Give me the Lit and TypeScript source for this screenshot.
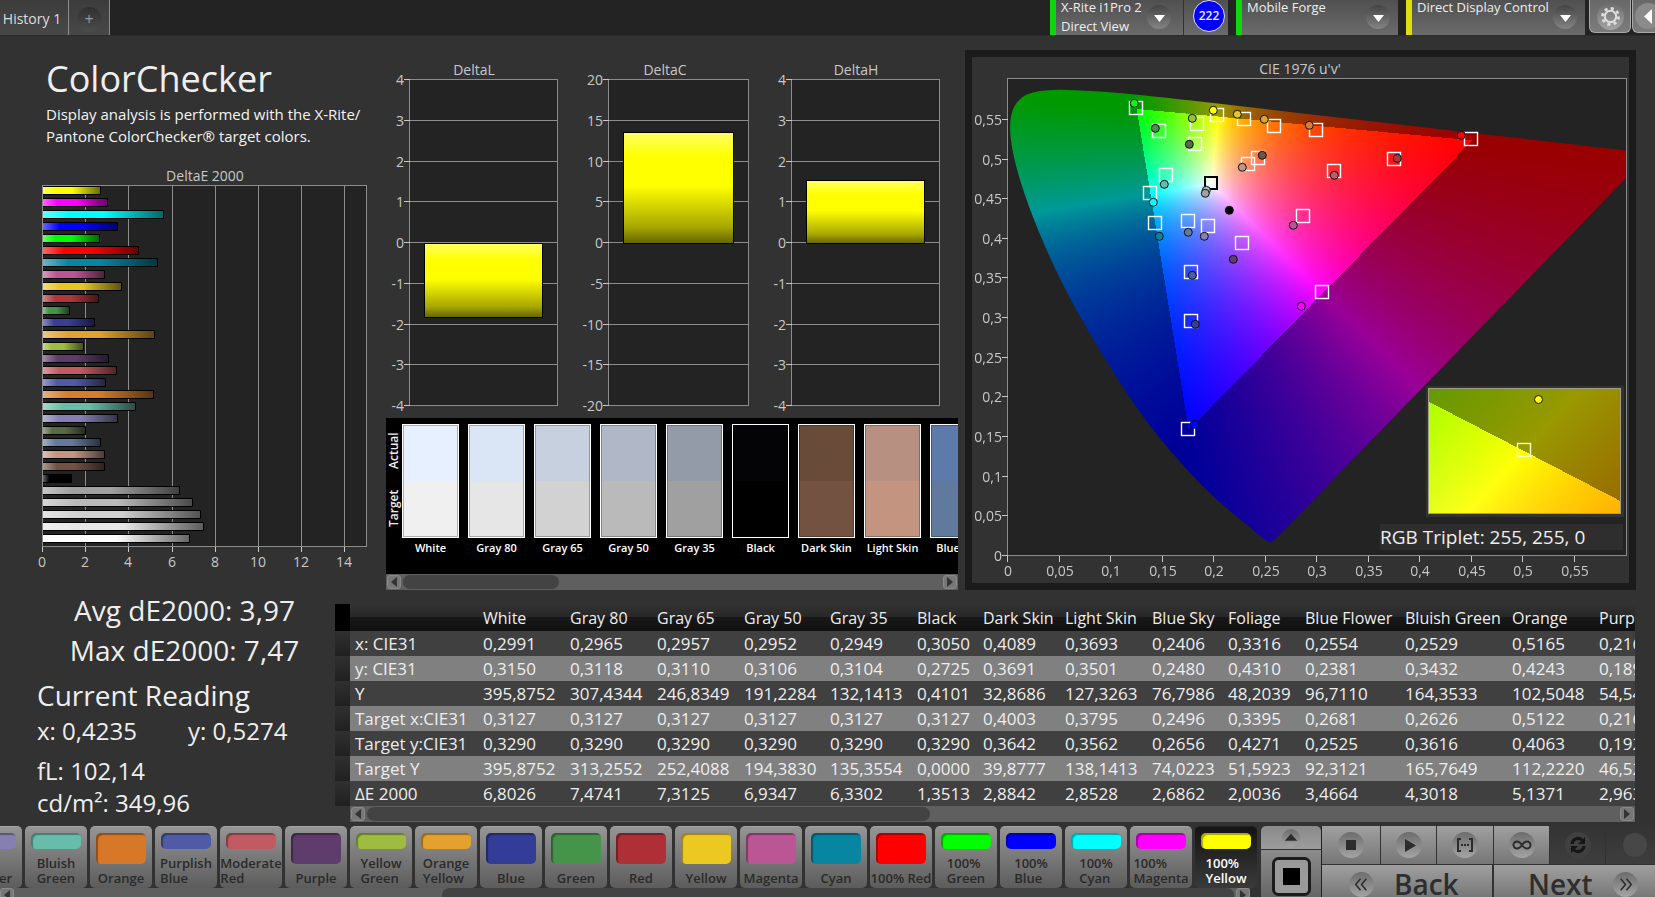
import { LitElement, html, svg, css } from "lit";
import { customElement } from "lit/decorators.js";

type Point = [number, number];

/* ---------- measurement data ---------- */

const BARS: [string, number][] = [
  ["#ffff00", 2.7], ["#ff00ff", 3.02], ["#00ffff", 5.62], ["#0000ff", 3.49], ["#00ff00", 2.65],
  ["#ff0000", 4.45], ["#0885a1", 5.34], ["#bb5695", 2.88], ["#e7c71f", 3.67], ["#af363c", 2.6],
  ["#469449", 1.26], ["#383d96", 2.42], ["#e0a32e", 5.2], ["#9dbc40", 1.91], ["#5e3c6c", 3.07],
  ["#c15a63", 3.44], ["#505ba6", 2.93], ["#d67e2c", 5.1371], ["#67bdaa", 4.3018], ["#8580b1", 3.4664],
  ["#576c43", 2.0036], ["#627a9d", 2.6862], ["#c29682", 2.8528], ["#735244", 2.8842], ["#000000", 1.3513],
  ["#a0a0a0", 6.3302], ["#bababa", 6.9347], ["#d0d0d0", 7.3125], ["#e6e6e6", 7.4741], ["#ffffff", 6.8026],
];

interface DeltaChart { title: string; left: number; right: number; titleX: number; max: number; value: number; inset: number; }
const DELTAS: DeltaChart[] = [
  { title: "DeltaL", left: 410, right: 558, titleX: 474, max: 4, value: -1.81, inset: 14 },
  { title: "DeltaC", left: 609, right: 749, titleX: 665, max: 20, value: 13.6, inset: 14 },
  { title: "DeltaH", left: 792, right: 940, titleX: 856, max: 4, value: 1.55, inset: 14 },
];

const SWATCHES: [string, string, string][] = [
  ["White", "#e6f0ff", "#f0f0f0"], ["Gray 80", "#dae5f5", "#e6e6e6"], ["Gray 65", "#c6d0df", "#d2d2d2"],
  ["Gray 50", "#b0b8c8", "#bababa"], ["Gray 35", "#949ba8", "#a0a0a0"], ["Black", "#040406", "#000000"],
  ["Dark Skin", "#694b3a", "#735241"], ["Light Skin", "#b89082", "#c39580"], ["Blue Sky", "#5c7baa", "#5f7a9c"],
];

const COLUMNS: [string, number][] = [
  ["White", 87], ["Gray 80", 87], ["Gray 65", 87], ["Gray 50", 86], ["Gray 35", 87], ["Black", 66],
  ["Dark Skin", 82], ["Light Skin", 87], ["Blue Sky", 76], ["Foliage", 77], ["Blue Flower", 100],
  ["Bluish Green", 107], ["Orange", 87], ["Purplish Blue", 107],
];
const ROWS: [string, string][] = [
  ["x: CIE31", "0,2991 0,2965 0,2957 0,2952 0,2949 0,3050 0,4089 0,3693 0,2406 0,3316 0,2554 0,2529 0,5165 0,2162"],
  ["y: CIE31", "0,3150 0,3118 0,3110 0,3106 0,3104 0,2725 0,3691 0,3501 0,2480 0,4310 0,2381 0,3432 0,4243 0,1895"],
  ["Y", "395,8752 307,4344 246,8349 191,2284 132,1413 0,4101 32,8686 127,3263 76,7986 48,2039 96,7110 164,3533 102,5048 54,5433"],
  ["Target x:CIE31", "0,3127 0,3127 0,3127 0,3127 0,3127 0,3127 0,4003 0,3795 0,2496 0,3395 0,2681 0,2626 0,5122 0,2162"],
  ["Target y:CIE31", "0,3290 0,3290 0,3290 0,3290 0,3290 0,3290 0,3642 0,3562 0,2656 0,4271 0,2525 0,3616 0,4063 0,1925"],
  ["Target Y", "395,8752 313,2552 252,4088 194,3830 135,3554 0,0000 39,8777 138,1413 74,0223 51,5923 92,3121 165,7649 112,2220 46,5211"],
  ["ΔE 2000", "6,8026 7,4741 7,3125 6,9347 6,3302 1,3513 2,8842 2,8528 2,6862 2,0036 3,4664 4,3018 5,1371 2,9633"],
];

const PATCHES: [string, string][] = [
  ["Blue Flower", "#8580b1"], ["Bluish Green", "#67bdaa"], ["Orange", "#d67827"], ["Purplish Blue", "#505ba6"],
  ["Moderate Red", "#c15a63"], ["Purple", "#5e3c6c"], ["Yellow Green", "#9dbc40"], ["Orange Yellow", "#e5a12e"],
  ["Blue", "#333c96"], ["Green", "#469449"], ["Red", "#af2f37"], ["Yellow", "#ebc822"], ["Magenta", "#bb5695"],
  ["Cyan", "#0885a1"], ["100% Red", "#ff0000"], ["100% Green", "#00ff00"], ["100% Blue", "#0000ff"],
  ["100% Cyan", "#00ffff"], ["100% Magenta", "#ff00ff"], ["100% Yellow", "#ffff00"],
];

/* Marker positions in chart units of the CIE drawing. */
const TARGETS: Point[] = [
  [1136, 108], [1159, 131], [1197, 124], [1195, 144], [1217, 115], [1244, 119], [1274, 126], [1316, 130],
  [1258, 158], [1248, 164], [1166, 175], [1150, 193], [1155, 223], [1188, 221], [1208, 226], [1242, 243],
  [1191, 272], [1303, 216], [1334, 171], [1471, 139], [1394, 159], [1322, 292], [1191, 321], [1188, 429],
];
const READINGS: [number, number, string][] = [
  [1134, 103, "#00ff00"], [1155, 128, "#469449"], [1192, 118, "#9dbc40"], [1189, 144, "#576c43"],
  [1213, 110, "#ffff00"], [1237, 114, "#e7c71f"], [1264, 119, "#e0a32e"], [1309, 125, "#d67e2c"],
  [1262, 155, "#735244"], [1242, 167, "#c29682"], [1206, 190, "#bababa"], [1205, 193, "#a0a0a0"],
  [1164, 184, "#67bdaa"], [1153, 202, "#00ffff"], [1159, 236, "#0885a1"], [1188, 232, "#627a9d"],
  [1204, 236, "#8580b1"], [1233, 259, "#5e3c6c"], [1192, 275, "#505ba6"], [1229, 210, "#000000"],
  [1293, 225, "#bb5695"], [1334, 175, "#c15a63"], [1461, 135, "#ff0000"], [1397, 158, "#af363c"],
  [1301, 306, "#ff00ff"], [1195, 324, "#383d96"], [1194, 424, "#0000ff"],
];

/* Spectral locus in CIE 1976 u'v'. */
const LOCUS: Point[] = [
  [.2568, .0163], [.2522, .0169], [.2461, .0226], [.2347, .035], [.2161, .0549], [.1877, .0871], [.1441, .151],
  [.1147, .2044], [.0828, .2708], [.0521, .3427], [.0282, .4117], [.0119, .4698], [.0035, .5131], [.0014, .5432],
  [.0046, .5638], [.0123, .577], [.0231, .5837], [.036, .5861], [.0501, .5868], [.0792, .5856], [.1127, .5821],
  [.1531, .5766], [.2026, .5694], [.2623, .5604], [.3315, .5501], [.4035, .5393], [.4692, .5296], [.5203, .5219],
  [.583, .5125], [.6234, .5065],
];

/* Colour of a chromaticity; anything outside Rec. 709 is shown dimmed. */
function chromaColour(x: number, y: number): [number, number, number] {
  const z = 1 - x - y;
  const lin = [
    3.2406 * x - 1.5372 * y - 0.4986 * z,
    -0.9689 * x + 1.8758 * y + 0.0415 * z,
    0.0557 * x - 0.204 * y + 1.057 * z,
  ];
  const dim = Math.min(...lin) < 0 ? 0.6 : 1;
  const peak = Math.max(...lin);
  return lin.map((c) => Math.round(255 * dim * (Math.max(c, 0) / peak))) as [number, number, number];
}

function paint(canvas: HTMLCanvasElement, toXy: (px: number, py: number) => Point) {
  const { width, height } = canvas;
  const ctx = canvas.getContext("2d")!;
  const image = ctx.createImageData(width, height);
  for (let py = 0; py < height; py++) {
    for (let px = 0; px < width; px++) {
      const [x, y] = toXy(px + 0.5, py + 0.5);
      const [r, g, b] = chromaColour(x, y);
      image.data.set([r, g, b, 255], (py * width + px) * 4);
    }
  }
  ctx.putImageData(image, 0, 0);
  return ctx;
}

const U_SCALE = 1030;
const V_SCALE = 793;
const plotX = (u: number) => 1008 + u * U_SCALE;
const plotY = (v: number) => 555 - v * V_SCALE;
const comma = (n: number) => String(n).replace(".", ",");

/* ---------- scroll bar ---------- */

@customElement("scroll-strip")
class ScrollStrip extends LitElement {
  static properties = { start: { type: Number }, size: { type: Number } };
  declare start: number;
  declare size: number;
  static styles = css`
    :host { display: flex; align-items: center; gap: 2px; height: 16px; background: #5f5f5f; padding: 0 1px; box-sizing: border-box; }
    button { flex: none; width: 14px; height: 14px; padding: 0; border: 1px solid #8a8a8a; border-radius: 3px; background: #777; display: grid; place-items: center; }
    svg { width: 6px; height: 10px; fill: #333; display: block; }
    .track { flex: 1; height: 14px; display: flex; }
    .thumb { background: #434343; border-radius: 7px; }
  `;
  render() {
    return html`
      <button aria-label="Scroll left"><svg viewBox="0 0 6 10"><path d="M6 0v10L0 5z"/></svg></button>
      <div class="track"><div class="thumb" style="margin-left:${this.start}%;width:${this.size}%"></div></div>
      <button aria-label="Scroll right"><svg viewBox="0 0 6 10"><path d="M0 0v10l6-5z"/></svg></button>`;
  }
}

/* ---------- bar charts ---------- */

@customElement("delta-e-chart")
class DeltaEChart extends LitElement {
  static styles = css`
    :host { display: block; }
    svg { display: block; width: 100%; }
    text { font: 14px "Open Sans", sans-serif; fill: #c8c8c8; text-anchor: middle; }
  `;
  render() {
    const unit = 21.6;
    const ticks = [0, 2, 4, 6, 8, 10, 12, 14];
    return html`<svg viewBox="0 163 386 427" role="img" aria-label="DeltaE 2000 per patch">
      <defs><linearGradient id="shade">
        <stop offset="0" stop-color="#fff" stop-opacity=".4"/><stop offset=".22" stop-color="#fff" stop-opacity="0"/>
        <stop offset=".5" stop-color="#000" stop-opacity="0"/><stop offset="1" stop-color="#000" stop-opacity=".6"/>
      </linearGradient></defs>
      <text x="205" y="181">DeltaE 2000</text>
      <rect x="42.5" y="185.5" width="324" height="361" fill="#232323" stroke="#8c8c8c"/>
      ${ticks.map((t) => svg`
        <path d="M${Math.round(42 + t * unit) + .5} 186V551" stroke="#8c8c8c"/>
        <path d="M${Math.round(42 + t * unit) + .5} 547V552" stroke="#c8c8c8"/>
        <text x=${Math.round(42 + t * unit)} y="567">${t}</text>`)}
      ${BARS.map(([c, v], i) => svg`
        <rect x="43" y=${186.5 + i * 12} width=${v * unit - .5} height="8" fill=${c}/>
        <rect x="43" y=${186.5 + i * 12} width=${v * unit - .5} height="8" fill="url(#shade)"/>
        <path d="M43 ${186.5 + i * 12}H${Math.round(42 + v * unit) + .5}v8H43" fill="none" stroke="#000"/>`)}
    </svg>`;
  }
}

@customElement("delta-lch-chart")
class DeltaLchChart extends LitElement {
  static styles = css`
    :host { display: block; }
    svg { display: block; width: 100%; }
    text { font: 14px "Open Sans", sans-serif; fill: #c8c8c8; text-anchor: middle; }
    .tick { text-anchor: end; }
  `;
  chart(d: DeltaChart) {
    const zero = 243;
    const barY = zero - (d.value / d.max) * 163;
    const top = Math.round(Math.min(zero, barY)) + .5;
    const height = Math.round(Math.abs(barY - zero));
    const x = d.left + d.inset;
    const w = d.right - d.left - 2 * d.inset - 2;
    return svg`
      <text x=${d.titleX} y="75">${d.title}</text>
      <rect x=${d.left - .5} y="79.5" width=${d.right - d.left} height="326" fill="#232323" stroke="#8c8c8c"/>
      ${[4, 3, 2, 1, 0, -1, -2, -3, -4].map((k) => {
        const y = Math.round(zero - k * 40.75) - .5;
        return svg`
          <path d="M${d.left} ${y}H${d.right}" stroke="#8c8c8c"/>
          <path d="M${d.left - 6} ${y}h6" stroke="#c8c8c8"/>
          <text class="tick" x=${d.left - 6} y=${Math.round(y + 5)}>${(k * d.max) / 4}</text>`;
      })}
      <rect x=${x + .5} y=${top} width=${w} height=${height} fill="url(#fall)" stroke="#000"/>`;
  }
  render() {
    return html`<svg viewBox="386 56 572 362" role="img" aria-label="DeltaL, DeltaC and DeltaH">
      <defs><linearGradient id="fall" x2="0" y2="1">
        <stop offset="0" stop-color="#ffff66"/><stop offset=".22" stop-color="#ffff00"/>
        <stop offset=".48" stop-color="#ffff00"/><stop offset=".85" stop-color="#a8a800"/><stop offset="1" stop-color="#646400"/>
      </linearGradient></defs>
      ${DELTAS.map((d) => this.chart(d))}
    </svg>`;
  }
}

/* ---------- chromaticity diagram ---------- */

@customElement("cie-chart")
class CieChart extends LitElement {
  static styles = css`
    :host { display: block; border: 7px solid #1b1b1b; background: #323232; }
    svg { display: block; width: 100%; }
    canvas { display: block; width: 100%; height: 100%; }
    text { font: 14px "Open Sans", sans-serif; fill: #c8c8c8; text-anchor: middle; }
    .left { text-anchor: end; }
    .triplet { font-size: 19px; fill: #eee; text-anchor: start; }
  `;
  firstUpdated() {
    const main = this.renderRoot.querySelector<HTMLCanvasElement>(".gamut")!;
    const ctx = paint(main, (px, py) => {
      const u = px / U_SCALE;
      const v = (main.height - py) / V_SCALE;
      const d = 6 * u - 16 * v + 12;
      return [(9 * u) / d, (4 * v) / d];
    });
    const pts = LOCUS.map(([u, v]): Point => [u * U_SCALE, main.height - v * V_SCALE]);
    ctx.globalCompositeOperation = "destination-in";
    ctx.beginPath();
    const n = pts.length;
    ctx.moveTo(pts[n - 1][0], pts[n - 1][1]);
    ctx.lineTo(pts[0][0] + 4, pts[0][1] - 4);
    for (let i = 0; i < n - 1; i++) {
      ctx.quadraticCurveTo(pts[i][0], pts[i][1], (pts[i][0] + pts[i + 1][0]) / 2, (pts[i][1] + pts[i + 1][1]) / 2);
    }
    ctx.closePath();
    ctx.fill();
    const inset = this.renderRoot.querySelector<HTMLCanvasElement>(".detail")!;
    paint(inset, (px, py) => [0.4193 + (px - 95) / 3500, 0.5053 - (py - 62) / 2285]);
  }
  render() {
    const steps = Array.from({ length: 12 }, (_, i) => Math.round(i * 5) / 100);
    return html`<svg viewBox="972 57 657 526" role="img" aria-label="CIE 1976 chromaticity diagram">
      <text x="1300" y="74">CIE 1976 u'v'</text>
      <rect x="1008" y="79" width="618" height="476" fill="#232323"/>
      <foreignObject x="1008" y="79" width="618" height="476"><canvas class="gamut" width="618" height="476"></canvas></foreignObject>
      <rect x="1007.5" y="78.5" width="619" height="477" fill="none" stroke="#8c8c8c"/>
      ${steps.map((s) => svg`
        <path d="M${Math.round(plotX(s)) - .5} 556v6M1002 ${Math.round(plotY(s)) + .5}h6" stroke="#c8c8c8"/>
        <text x=${Math.round(plotX(s))} y="576">${comma(s)}</text>
        <text class="left" x="1002" y=${Math.round(plotY(s)) + 6}>${comma(s)}</text>`)}
      ${TARGETS.map(([x, y]) => svg`<rect x=${x - 6.5} y=${y - 6.5} width="13" height="13" fill="none" stroke="#fff" stroke-width="1.4"/>`)}
      <rect x="1205" y="177" width="12" height="12" fill="none" stroke="#000" stroke-width="2"/>
      ${READINGS.map(([x, y, c]) => svg`<circle cx=${x + .3} cy=${y + .3} r="4" fill=${c} stroke="#111"/>`)}
      <rect x="1426" y="386" width="198" height="131" fill="#323232"/>
      <foreignObject x="1429" y="389" width="191" height="124"><canvas class="detail" width="191" height="124"></canvas></foreignObject>
      <rect x="1428.5" y="388.5" width="192" height="125" fill="none" stroke="#a0a080"/>
      <rect x="1517.5" y="443.5" width="13" height="13" fill="none" stroke="#ffffd0" stroke-width="1.4"/>
      <circle cx="1538.5" cy="399.5" r="4" fill="#ffff00" stroke="#111"/>
      <rect x="1380" y="524" width="243" height="26" fill="#2e2e2e"/>
      <text class="triplet" x="1380" y="544">RGB Triplet: 255, 255, 0</text>
    </svg>`;
  }
}

/* ---------- page ---------- */

const disc = svg`<defs><linearGradient id="disc" x2="0" y2="1"><stop offset="0" stop-color="#6c6c6c"/><stop offset="1" stop-color="#a4a4a4"/></linearGradient></defs>`;

@customElement("app-root")
class AppRoot extends LitElement {
  static styles = css`
    :host { display: flex; flex-direction: column; min-height: 100vh; background: #323232; color: #eee; font: 14px/20px "Open Sans", sans-serif; overflow: hidden; }
    * { box-sizing: border-box; }
    button { font: inherit; color: inherit; margin: 0; padding: 0; border: 0; }
    h1, h2, p { margin: 0; font-weight: 400; }
    svg { display: block; }

    .top { display: flex; height: 36px; background: #232323; border-bottom: 1px solid #2b2b2b; }
    .tab { width: 69px; background: linear-gradient(#3c3c3c, #484848); border-right: 1px solid #8c8c8c; padding: 2px 4px 0 0; color: #ddd; white-space: nowrap; }
    .tab.add { width: 41px; padding: 3px 0 0; display: grid; place-items: center; }
    .plus { width: 25px; height: 25px; border-radius: 50%; background: linear-gradient(#303030, #4c4c4c); color: #999; font-size: 16px; line-height: 24px; }
    .devices { margin-left: auto; display: flex; gap: 8px; overflow: hidden; }
    .device { display: flex; height: 35px; background: linear-gradient(#505050, #6b6b6b); font-size: 13px; line-height: 19px; text-align: left; border-left: 6px solid #0fd70f; }
    .device.warn { border-left-color: #dede0c; }
    .name { flex: 1; padding: 0 0 0 5px; margin-top: -2px; }
    .drop { flex: none; align-self: center; width: 24px; height: 24px; margin: 0 8px 2px 0; border-radius: 50%; background: linear-gradient(#444, #848484); display: grid; place-items: center; }
    .drop svg { width: 11px; height: 7px; fill: #fff; margin-top: 4px; }
    .probe { display: flex; }
    .probe .device { width: 134px; border-right: 1px solid #333; padding-right: 4px; }
    .count { width: 44px; background: linear-gradient(#505050, #6b6b6b); display: grid; place-items: center; padding: 0 0 3px 6px; height: 35px; }
    .badge { width: 32px; height: 32px; border-radius: 50%; background: #0000ff; border: 1px solid #dde; font-weight: 600; font-size: 12px; line-height: 30px; text-align: center; }
    .forge { width: 162px; }
    .direct { width: 179px; }
    .tools { display: flex; margin-left: -4px; gap: 1px; }
    .tool { width: 42px; height: 33px; border: 1px solid #a8a8a8; border-top: 0; border-radius: 0 0 6px 6px; background: linear-gradient(#686868, #7c7c7c); display: grid; place-items: center; }
    .tool.collapse { width: 23px; border-right: 0; border-radius: 0 0 0 6px; justify-items: end; }

    .upper { display: grid; grid-template-columns: 386fr 579fr 671fr; padding: 0 19px 0 0; }
    .intro h1 { padding: 19px 0 0 46px; font-size: 36px; line-height: 48px; }
    .intro p { padding: 0 0 16px 46px; font-size: 15px; line-height: 22px; font-weight: 500; white-space: pre-line; color: #f4f4f4; }
    .middle { padding: 20px 7px 0 0; min-width: 0; }
    .right { padding-top: 14px; }

    .compare { background: #000; }
    .row { display: flex; height: 156px; padding: 6px 0 0 1px; overflow: hidden; }
    .axis { flex: none; width: 15px; display: grid; grid-template-rows: 54px 60px; font-weight: 600; font-size: 12px; line-height: 14px; }
    .axis span { writing-mode: vertical-rl; transform: rotate(180deg); text-align: center; }
    .swatch { flex: none; width: 66px; text-align: center; font-weight: 600; font-size: 11px; line-height: 20px; color: #fff; white-space: nowrap; }
    .swatch .pair { display: grid; width: 57px; height: 114px; border: 1px solid #fff; outline: 1px solid #0004; outline-offset: -2px; }
    .swatch .cap { width: 57px; display: flex; justify-content: center; }

    .lower { display: grid; grid-template-columns: 335px minmax(0, 1fr); padding-right: 20px; }
    .stats { white-space: nowrap; }
    .totals { text-align: center; font-size: 28px; line-height: 40px; padding: 0 0 5px 34px; }
    .reading { padding-left: 37px; }
    .reading h2 { font-size: 28px; line-height: 40px; }
    .line { display: grid; grid-template-columns: 151px 1fr; font-size: 24px; line-height: 32px; }
    .line.gap { padding-top: 8px; }

    .data { margin-top: 14px; }
    .clip { overflow: hidden; }
    table { border-collapse: collapse; table-layout: fixed; width: 1366px; font-size: 17px; }
    th, td { text-align: left; font-weight: 400; padding: 0 0 0 5px; white-space: nowrap; }
    thead tr { height: 27px; background: linear-gradient(#323232, #272727 50%, #181818 50%, #101010); font-size: 16px; }
    tbody tr { height: 25px; background: #404040; line-height: 24px; }
    tbody tr:nth-child(even) { background: #808080; }
    .grip { width: 15px; padding: 0; background: #000; }
    tbody .grip { background: linear-gradient(#303030, #202020); }
    .data scroll-strip { margin-left: 15px; }

    .foot { margin-top: 4px; display: flex; flex: 1 0 71px; height: 71px; overflow: hidden; }
    .strip { flex: 1; min-width: 0; display: flex; flex-direction: column; overflow: hidden; }
    .patches { display: flex; justify-content: flex-end; gap: 3px; padding-right: 3px; }
    .patch { flex: none; width: 62px; height: 62px; border-radius: 5px; background: linear-gradient(#959595, #5c5c5c); color: #2a2a2a; font-weight: 600; font-size: 13px; line-height: 15px; display: flex; flex-direction: column; align-items: center; padding: 6px 0 2px; border-top: 1px solid #a5a5a5; }
    .patch .chip { flex: 1; width: 50px; border-radius: 5px; margin-bottom: 7px; box-shadow: inset 2px 2px 1px #0005; }
    .patch .label { text-align: left; white-space: pre; }
    .patch.on { background: linear-gradient(#141414, #3a3a3a); border-top-color: #222; color: #fff; }
    .strip scroll-strip { flex: none; margin-right: 10px; height: 14px; padding: 0; }

    .side { flex: none; width: 61px; margin-left: 1px; border-right: 1px solid #222; display: grid; grid-template-rows: 23px 1fr; gap: 1px; }
    .side button { background: linear-gradient(#8a8a8a, #9c9c9c); display: grid; place-items: center; border-radius: 5px 5px 0 0; }
    .side .target { border-radius: 0; background: linear-gradient(#8c8c8c, #666); padding-top: 6px; }
    .controls { flex: none; width: 333px; display: grid; grid-template-rows: 38px 1fr; gap: 1px; background: #323232; }
    .keys { display: grid; grid-template-columns: 58px 55px 56px 55px 55px 49px; gap: 1px; }
    .keys button, .nav button { background: linear-gradient(#a0a0a0, #767676); }
    .keys button { display: grid; place-items: center; }
    .keys .off { background: linear-gradient(#333, #3e3e3e); }
    .keys .last { justify-items: end; }
    .nav { display: grid; grid-template-columns: 170px 161px; gap: 2px; }
    .nav button { display: flex; align-items: center; gap: 20px; padding: 5px 0 0 27px; font-weight: 600; font-size: 28px; line-height: 28px; color: #2e2e2e; }
    .nav .next { padding-left: 34px; }
  `;

  disc(size: number, body: unknown, off = false) {
    return html`<svg width=${size} height=${size} viewBox="0 0 26 26">${disc}
      <circle cx="13" cy="13" r="13" fill=${off ? "#404040" : "url(#disc)"}/>${body}</svg>`;
  }

  drop() {
    return html`<span class="drop"><svg viewBox="0 0 11 7"><path d="M0 0h11L5.500 7z"/></svg></span>`;
  }

  patch([name, colour]: [string, string], last: boolean) {
    const label = name === "100% Red" ? name : name.replace(" ", "\n");
    return html`<button class="patch ${last ? "on" : ""}" aria-pressed=${last}>
      <span class="chip" style="background:${colour}"></span><span class="label">${label}</span></button>`;
  }

  render() {
    const ink = "#2c2c2c";
    return html`
      <header class="top">
        <button class="tab">History 1</button>
        <button class="tab add" aria-label="Add history"><span class="plus">+</span></button>
        <div class="devices">
          <div class="probe">
            <button class="device" aria-haspopup="listbox"><span class="name">X-Rite i1Pro 2<br>Direct View</span>${this.drop()}</button>
            <div class="count"><span class="badge">222</span></div>
          </div>
          <button class="device forge" aria-haspopup="listbox"><span class="name">Mobile Forge</span>${this.drop()}</button>
          <button class="device warn direct" aria-haspopup="listbox"><span class="name">Direct Display Control</span>${this.drop()}</button>
          <div class="tools">
            <button class="tool" aria-label="Settings">${this.disc(27, svg`
              <circle cx="13" cy="13" r="5.500" fill="none" stroke="#ddd" stroke-width="2"/>
              <circle cx="13" cy="13" r="7.800" fill="none" stroke="#ddd" stroke-width="2.600" stroke-dasharray="3 3.126"/>`)}</button>
            <button class="tool collapse" aria-label="Collapse"><svg width="20" height="27" viewBox="0 0 20 27">
              <circle cx="13" cy="13" r="13" fill="#8a8a8a"/><path d="M17 6v15L9 13.500z" fill="#fff"/></svg></button>
          </div>
        </div>
      </header>

      <main>
        <div class="upper">
          <section class="intro">
            <h1>ColorChecker</h1>
            <p>${"Display analysis is performed with the X-Rite/\nPantone ColorChecker® target colors."}</p>
            <delta-e-chart></delta-e-chart>
          </section>
          <section class="middle">
            <delta-lch-chart></delta-lch-chart>
            <div class="compare">
              <div class="row">
                <div class="axis"><span>Actual</span><span>Target</span></div>
                ${SWATCHES.map(([name, a, t]) => html`<div class="swatch">
                  <div class="pair"><i style="background:${a}"></i><i style="background:${t}"></i></div>
                  <div class="cap">${name}</div></div>`)}
              </div>
              <scroll-strip .start=${0} .size=${29}></scroll-strip>
            </div>
          </section>
          <section class="right"><cie-chart></cie-chart></section>
        </div>

        <div class="lower">
          <div class="stats">
            <div class="totals"><p>Avg dE2000: 3,97</p><p>Max dE2000: 7,47</p></div>
            <section class="reading">
              <h2>Current Reading</h2>
              <div class="line"><span>x: 0,4235</span><span>y: 0,5274</span></div>
              <div class="line gap"><span>fL: 102,14</span></div>
              <div class="line"><span>cd/m²: 349,96</span></div>
            </section>
          </div>
          <div class="data">
            <div class="clip">
              <table>
                <colgroup><col style="width:15px"><col style="width:128px">${COLUMNS.map(([, w]) => html`<col style="width:${w}px">`)}</colgroup>
                <thead><tr><th class="grip"></th><th></th>${COLUMNS.map(([n]) => html`<th scope="col">${n}</th>`)}</tr></thead>
                <tbody>${ROWS.map(([label, cells]) => html`<tr><td class="grip"></td><th scope="row">${label}</th>
                  ${cells.split(" ").map((c) => html`<td>${c}</td>`)}</tr>`)}</tbody>
              </table>
            </div>
            <scroll-strip .start=${0} .size=${45}></scroll-strip>
          </div>
        </div>
      </main>

      <footer class="foot">
        <div class="strip">
          <div class="patches">${PATCHES.map((p, i) => this.patch(p, i === PATCHES.length - 1))}</div>
          <scroll-strip .start=${35} .size=${65}></scroll-strip>
        </div>
        <div class="side">
          <button aria-label="Expand">${this.disc(18, svg`<path d="M4 17h18L13 7z" fill=${ink}/>`)}</button>
          <button class="target" aria-label="Pattern window"><svg width="39" height="39" viewBox="0 0 39 39">
            <rect x="1.500" y="1.500" width="36" height="36" rx="5" fill="#9a9a9a" stroke="#1c1c1c" stroke-width="3"/>
            <rect x="11" y="11" width="17" height="17" fill="#000"/></svg></button>
        </div>
        <div class="controls">
          <div class="keys">
            <button aria-label="Stop">${this.disc(26, svg`<path d="M8 8h10v10H8z" fill=${ink}/>`)}</button>
            <button aria-label="Play">${this.disc(26, svg`<path d="M9 7v13l11-6.500z" fill=${ink}/>`)}</button>
            <button aria-label="Range">${this.disc(26, svg`<path d="M9 7H6v12h3M17 7h3v12h-3" fill="none" stroke=${ink} stroke-width="2"/>
              <path d="M9 13h2m1 0h2m1 0h2" stroke=${ink} stroke-width="2"/>`)}</button>
            <button aria-label="Continuous">${this.disc(26, svg`<path d="M13 13c-2-3-3.500-3.500-5-3.500a3.500 3.500 0 0 0 0 7c1.500 0 3-.5 5-3.500s3.500-3.500 5-3.500a3.500 3.500 0 0 1 0 7c-1.500 0-3-.5-5-3.500z" fill="none" stroke=${ink} stroke-width="2"/>`)}</button>
            <button class="off" aria-label="Refresh" disabled>${this.disc(26, svg`<path d="M7 12a6 6 0 0 1 10-4M19 14a6 6 0 0 1-10 4" fill="none" stroke="#151515" stroke-width="3"/>
              <path d="M20 5v7h-7zM6 21v-7h7z" fill="#151515"/>`, true)}</button>
            <button class="off last" aria-label="Unused" disabled><svg width="33" height="26" viewBox="0 0 33 26"><circle cx="13" cy="13" r="12" fill="#474747"/></svg></button>
          </div>
          <div class="nav">
            <button class="back">${this.disc(25, svg`<path d="M12 7l-5 6 5 6M18 7l-5 6 5 6" fill="none" stroke=${ink} stroke-width="1.600"/>`)}Back</button>
            <button class="next">Next${this.disc(25, svg`<path d="M8 7l5 6-5 6M14 7l5 6-5 6" fill="none" stroke=${ink} stroke-width="1.600"/>`)}</button>
          </div>
        </div>
      </footer>`;
  }
}
